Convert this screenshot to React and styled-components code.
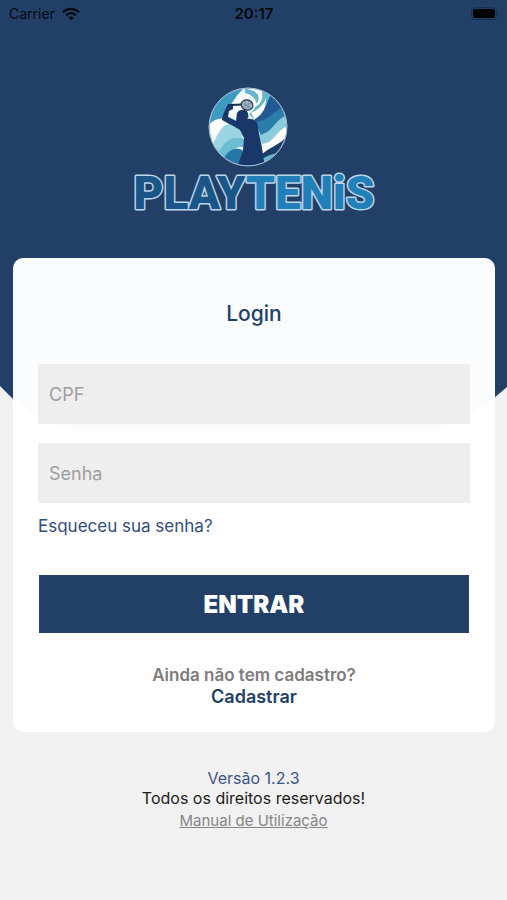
import React from "react";
import styled, { createGlobalStyle } from "styled-components";

const GlobalStyle = createGlobalStyle`
  *, *::before, *::after { box-sizing: border-box; }
  body {
    margin: 0;
    background: #f1f1f1;
    font-family: Inter, "Liberation Sans", sans-serif;
  }
`;

const Page = styled.div`
  min-height: 100vh;
  position: relative;
  isolation: isolate;
  display: flex;
  flex-direction: column;
  background: #f1f1f1;

  &::before {
    content: "";
    position: absolute;
    z-index: -1;
    inset: 0 0 auto;
    height: 430px;
    background: #223f68;
    clip-path: polygon(
      0 0, 100% 0, 100% 387px, calc(100% - 13px) 398px, calc(100% - 38px) 418px,
      calc(100% - 70px) 430px, 70px 430px, 38px 420px, 13px 399px, 0 386px
    );
  }
`;

const StatusBar = styled.header`
  height: 28px;
  padding: 0 8px 0 9px;
  display: grid;
  grid-template-columns: 1fr auto 1fr;
  align-items: center;
  font-size: 14px;
  line-height: 20px;
  color: #05090f;
`;

const Carrier = styled.div`
  display: flex;
  align-items: center;
  gap: 7px;
`;

const Clock = styled.time`
  font-size: 15px;
  font-weight: 600;
`;

const BatteryIcon = styled.svg`
  justify-self: end;
`;

const Brand = styled.div`
  height: 230px;
  padding-top: 58px;
  display: flex;
  flex-direction: column;
  align-items: center;
`;

const Emblem = styled.svg`
  width: 82px;
  height: 82px;
  margin-right: 12px;
`;

const Wordmark = styled.svg`
  width: 256px;
  height: 50px;
  overflow: visible;
`;

const WordmarkText = styled.text`
  font-family: Roboto, "Liberation Sans", sans-serif;
  font-size: 46px;
  font-weight: 900;
  fill: #1a5687;
  stroke: #bcd5e9;
  stroke-width: 3px;
  stroke-linejoin: round;
  paint-order: stroke;
`;

const WordmarkAccent = styled.tspan`
  fill: #2180b8;
`;

const Card = styled.main`
  margin: 0 12px 0 13px;
  padding: 40px 25px 24px;
  border-radius: 10px;
  background: rgba(255, 255, 255, 0.985);
`;

const Title = styled.h1`
  margin: 0 0 34px;
  text-align: center;
  font-size: 21px;
  line-height: 32px;
  font-weight: 500;
  color: #223f68;
`;

const Form = styled.form`
  display: flex;
  flex-direction: column;
`;

const Field = styled.input`
  width: 100%;
  height: 60px;
  margin-bottom: 19px;
  padding: 0 11px;
  border: 0;
  border-radius: 0;
  background: #eeeeee;
  font: inherit;
  font-size: 18px;
  color: #333333;

  &::placeholder {
    color: #9d9e9f;
    opacity: 1;
  }
`;

const ForgotLink = styled.a`
  align-self: flex-start;
  margin: -7px 0 38px;
  font-size: 17px;
  line-height: 22px;
  color: #304d7c;
  text-decoration: none;
`;

const SubmitButton = styled.button`
  height: 58px;
  margin: 0 1px;
  border: 0;
  background: #223f68;
  color: #ffffff;
  font: inherit;
  font-size: 24px;
  font-weight: 900;
`;

const SignUp = styled.p`
  margin: 31px 0 0;
  display: flex;
  flex-direction: column;
  align-items: center;
  font-size: 17px;
  line-height: 22px;
  font-weight: 600;
  color: #7c7c7c;
`;

const SignUpLink = styled.a`
  font-size: 18px;
  color: #223f68;
  text-decoration: none;
`;

const Footer = styled.footer`
  padding: 36px 13px;
  display: flex;
  flex-direction: column;
  align-items: center;
  font-size: 16px;
  line-height: 20px;
  color: #1d1d1d;
`;

const Version = styled.span`
  color: #3b5488;
`;

const ManualLink = styled.a`
  margin-top: 3px;
  font-size: 15px;
  color: #858585;
`;

function WifiIcon() {
  return (
    <svg width="18" height="14" viewBox="0 0 18 14" aria-hidden="true">
      <g fill="none" stroke="#05090f" strokeWidth="2.3">
        <path d="M1 5.2C5.5.7 12.500.7 17 5.200" />
        <path d="M4 8.300c2.900-2.900 7.100-2.900 10 0" />
      </g>
      <path d="M6.300 10.500c1.600-1.500 3.800-1.500 5.400 0L9 13.300z" fill="#05090f" />
    </svg>
  );
}

function Battery() {
  return (
    <BatteryIcon width="28" height="14" viewBox="0 0 28 14" aria-hidden="true">
      <rect x="0.500" y="0.500" width="25" height="12" rx="4" fill="none" stroke="#172e52" />
      <rect x="2" y="2" width="22" height="9" rx="2.500" fill="#000" />
      <path d="M26.500 4.500c1.500.8 1.500 3.200 0 4z" fill="#172e52" />
    </BatteryIcon>
  );
}

function PlayerEmblem() {
  return (
    <Emblem viewBox="0 0 82 82" aria-hidden="true">
      <defs>
        <clipPath id="ball">
          <circle cx="41" cy="41" r="38.500" />
        </clipPath>
      </defs>
      <g clipPath="url(#ball)">
        <rect width="82" height="82" fill="#f3fafc" />
        <path d="M0 0H40C29 8 24 18 18 31L0 50z" fill="#3d9bc0" />
        <path d="M38 0H82V23C66 21 61 30 49 36L42 28C51 22 53 11 38 7z" fill="#65b6d0" />
        <path d="M40 3C57 6 53 17 44 22C55 20 57 12 54 2z" fill="#fff" />
        <path d="M44 27C53 23 57 18 59 12C59 24 55 30 49 36z" fill="#fff" />
        <path d="M82 8L64 8C58 20 58 27 47 34L50 38C59 37 62 31 78 24z" fill="#235a91" />
        <path d="M82 19C68 22 64 34 49 36L54 51C66 47 66 34 82 31z" fill="#2b7dac" />
        <path d="M82 29C68 31 68 46 52 49L55 58C70 56 70 42 82 40z" fill="#8bcbdc" />
        <path d="M82 42C70 43 67 54 54 65L57 78C70 65 74 64 82 55z" fill="#fff" />
        <path d="M54 69C65 59 75 59 82 47V65L63 82H55z" fill="#193d68" />
        <path d="M55 73C66 66 72 69 78 61L66 82H55z" fill="#68b8d1" />
        <path d="M0 45C9 31 24 25 34 40L36 54C25 49 17 60 12 69z" fill="#9bd5e2" />
        <path d="M2 39C8 32 15 32 21 34V38C16 39 11 46 6 58z" fill="#fff" />
        <path d="M11 67C20 51 28 50 37 53V61C25 60 20 67 18 76z" fill="#6cbdd2" />
        <path d="M17 72C22 63 30 60 36 65L32 80z" fill="#2478a8" />
        <path
          d="M21 18h5v5l-4 2-1 6 8 4 1-8c3-5 11-4 11 1 1 3 0 4-1 5 6-1 10 2 11 7 1 10 3 15 4 22l3 20H30l6-18 1-12-4-8-5-3-13-7c0-4 3-10 6-16z"
          fill="#1a376a"
        />
      </g>
      <path d="M24 19l11-.5" stroke="#183052" strokeWidth="2" />
      <ellipse cx="40" cy="19" rx="6" ry="5" transform="rotate(15 40 19)" fill="#9fb3bf" stroke="#183052" strokeWidth="1.200" />
      <path d="M35 17l9 5m-9-1l9-4m-6-2l1 8m3-8l-1 8" stroke="#5c788c" strokeWidth=".5" />
      <circle cx="41" cy="41" r="39" fill="none" stroke="#a9c4df" strokeWidth="1" />
    </Emblem>
  );
}

function Logo() {
  return (
    <Brand>
      <PlayerEmblem />
      <Wordmark viewBox="0 0 256 50" role="img" aria-label="PLAYTENiS">
        <WordmarkText x="128" y="41" textAnchor="middle">
          PLAY<WordmarkAccent>TENiS</WordmarkAccent>
        </WordmarkText>
      </Wordmark>
    </Brand>
  );
}

export default function App() {
  return (
    <>
      <GlobalStyle />
      <Page>
        <StatusBar>
          <Carrier>
            Carrier
            <WifiIcon />
          </Carrier>
          <Clock>20:17</Clock>
          <Battery />
        </StatusBar>
        <Logo />
        <Card>
          <Title>Login</Title>
          <Form onSubmit={(event) => event.preventDefault()}>
            <Field type="text" inputMode="numeric" placeholder="CPF" aria-label="CPF" />
            <Field type="password" placeholder="Senha" aria-label="Senha" />
            <ForgotLink href="#senha">Esqueceu sua senha?</ForgotLink>
            <SubmitButton type="submit">ENTRAR</SubmitButton>
          </Form>
          <SignUp>
            Ainda não tem cadastro?
            <SignUpLink href="#cadastro">Cadastrar</SignUpLink>
          </SignUp>
        </Card>
        <Footer>
          <Version>Versão 1.2.3</Version>
          <span>Todos os direitos reservados!</span>
          <ManualLink href="#manual">Manual de Utilização</ManualLink>
        </Footer>
      </Page>
    </>
  );
}
